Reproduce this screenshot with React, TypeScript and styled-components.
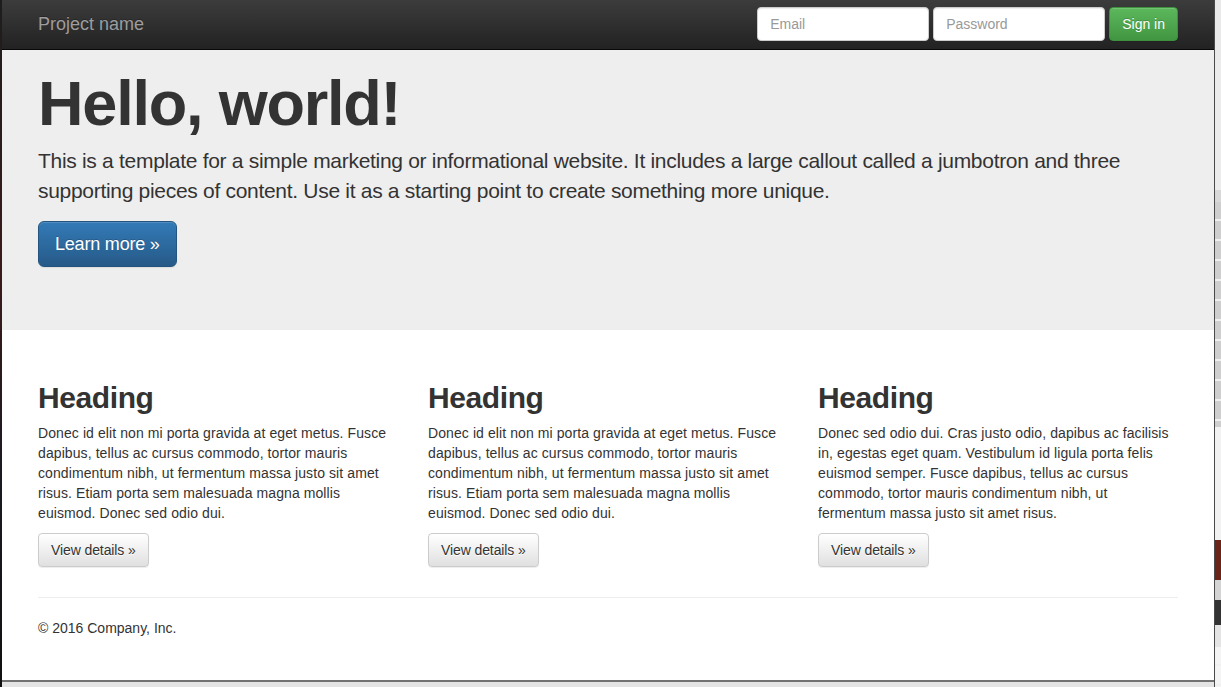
import * as React from "react";
import styled, { createGlobalStyle } from "styled-components";

const GlobalStyle = createGlobalStyle`
  html, body {
    margin: 0;
    padding: 0;
    overflow: hidden;
  }
  body {
    font-family: "Liberation Sans", Arial, Helvetica, sans-serif;
    font-size: 14px;
    line-height: 20px;
    color: #333;
    background: #e6e6e6;
  }
  * {
    box-sizing: border-box;
  }
`;

const columns = [
  {
    title: "Heading",
    text:
      "Donec id elit non mi porta gravida at eget metus. Fusce dapibus, tellus ac cursus commodo, tortor mauris condimentum nibh, ut fermentum massa justo sit amet risus. Etiam porta sem malesuada magna mollis euismod. Donec sed odio dui.",
  },
  {
    title: "Heading",
    text:
      "Donec id elit non mi porta gravida at eget metus. Fusce dapibus, tellus ac cursus commodo, tortor mauris condimentum nibh, ut fermentum massa justo sit amet risus. Etiam porta sem malesuada magna mollis euismod. Donec sed odio dui.",
  },
  {
    title: "Heading",
    text:
      "Donec sed odio dui. Cras justo odio, dapibus ac facilisis in, egestas eget quam. Vestibulum id ligula porta felis euismod semper. Fusce dapibus, tellus ac cursus commodo, tortor mauris condimentum nibh, ut fermentum massa justo sit amet risus.",
  },
];

// bits of the other window peeking out on the right edge
const backdrop = [
  { h: 60, bg: "#e9e9e9" },
  { h: 130, bg: "#ececec" },
  { h: 12, bg: "#d8d8d8" },
  { h: 225, bg: "#cfcfcf", stripes: true },
  { h: 113, bg: "#f2f2f2" },
  { h: 40, bg: "#6b2418" },
  { h: 20, bg: "#d4d4d4" },
  { h: 25, bg: "#333" },
  { h: 22, bg: "#e4e4e4" },
  { h: 40, bg: "#f4f4f4", stripes: true },
];

export default function App() {
  return (
    <>
      <GlobalStyle />
      <Desktop>
        <LeftEdge />
        <WindowColumn>
          <Window>
            <Navbar>
              <NavContainer>
                <Brand>Project name</Brand>
                <NavForm>
                  <Field type="text" placeholder="Email" />
                  <Field type="password" placeholder="Password" />
                  <Button variant="success">Sign in</Button>
                </NavForm>
              </NavContainer>
            </Navbar>

            <Jumbotron>
              <Container>
                <Title>Hello, world!</Title>
                <Lead>
                  This is a template for a simple marketing or informational website. It includes a large
                  callout called a jumbotron and three supporting pieces of content. Use it as a starting
                  point to create something more unique.
                </Lead>
                <Para>
                  <Button variant="primary" size="lg">Learn more &raquo;</Button>
                </Para>
              </Container>
            </Jumbotron>

            <Container>
              <Row>
                {columns.map((col, i) => (
                  <Column key={i}>
                    <Heading>{col.title}</Heading>
                    <BodyText>{col.text}</BodyText>
                    <Para>
                      <Button>View details &raquo;</Button>
                    </Para>
                  </Column>
                ))}
              </Row>
              <Rule />
              <Footer>
                <Para>&copy; 2016 Company, Inc.</Para>
              </Footer>
            </Container>
          </Window>
        </WindowColumn>
        <Backdrop>
          {backdrop.map((b, i) => (
            <BackdropBlock key={i} $h={b.h} $bg={b.bg} $stripes={!!b.stripes} />
          ))}
        </Backdrop>
      </Desktop>
    </>
  );
}

const Desktop = styled("div")`
  display: flex;
  width: 1221px;
  height: 687px;
  overflow: hidden;
`;
const LeftEdge = styled("div")`
  width: 2px;
  flex: none;
  background: linear-gradient(#1d1d1d, #3a1a1a 40%, #1a1a22 70%, #111);
`;
const WindowColumn = styled("div")`
  width: 1212px;
  flex: none;
  display: flex;
  flex-direction: column;
  background: #e4e4e4;
`;
const Window = styled("div")`
  height: 682px;
  flex: none;
  background: #fff;
  border-bottom: 2px solid #727272;
  overflow: hidden;
`;
const Backdrop = styled("div")`
  flex: 1;
  display: flex;
  flex-direction: column;
  border-left: 1px solid #4a4a4a;
`;
const BackdropBlock = styled("div")<{ $h: number; $bg: string; $stripes: boolean }>`
  height: ${p => p.$h}px;
  flex: none;
  background: ${p => p.$bg};
  ${p =>
    p.$stripes &&
    `background-image: repeating-linear-gradient(#0000 0 17px, #f0f0f0 17px 19px, #0000 19px 20px);`}
`;

const Navbar = styled("nav")`
  height: 50px;
  background: linear-gradient(#3c3c3c, #222);
  border-bottom: 1px solid #080808;
`;
const Container = styled("div")`
  width: 1170px;
  margin: 0 auto;
  padding: 0 15px;
`;
const NavContainer = styled(Container)`
  display: flex;
  justify-content: space-between;
  align-items: flex-start;
`;
const Brand = styled("a")`
  padding: 14px 0 15px;
  font-size: 18px;
  line-height: 20px;
  color: #9d9d9d;
  text-shadow: 0 -1px 0 rgba(0, 0, 0, 0.25);
`;
const NavForm = styled("form")`
  display: flex;
  gap: 4px;
  margin-top: 7px;
`;
const Field = styled("input")`
  width: 172px;
  height: 34px;
  padding: 6px 12px;
  font-family: inherit;
  font-size: 14px;
  color: #555;
  background: #fff;
  border: 1px solid #ccc;
  border-radius: 4px;
  box-shadow: inset 0 1px 1px rgba(0, 0, 0, 0.075);
  outline: none;
  &::placeholder {
    color: #999;
  }
`;

const Button = styled("a")<{ variant?: "default" | "primary" | "success"; size?: "lg" }>`
  display: inline-block;
  font-family: inherit;
  font-size: ${p => (p.size === "lg" ? "18px" : "14px")};
  line-height: ${p => (p.size === "lg" ? "24px" : "20px")};
  padding: ${p => (p.size === "lg" ? "10px 16px" : "6px 12px")};
  border-radius: ${p => (p.size === "lg" ? "6px" : "4px")};
  border: 1px solid;
  white-space: nowrap;
  cursor: pointer;
  box-shadow: inset 0 1px 0 rgba(255, 255, 255, 0.15), 0 1px 1px rgba(0, 0, 0, 0.075);
  ${p =>
    p.variant === "primary"
      ? `
    color: #fff;
    background: linear-gradient(#337ab7, #265a88);
    border-color: #245580;
    text-shadow: 0 -1px 0 rgba(0, 0, 0, 0.2);
    letter-spacing: -0.2px;
  `
      : p.variant === "success"
      ? `
    color: #fff;
    background: linear-gradient(#5cb85c, #419641);
    border-color: #3e8f3e;
    text-shadow: 0 -1px 0 rgba(0, 0, 0, 0.2);
  `
      : `
    color: #333;
    background: linear-gradient(#fff, #e0e0e0);
    border-color: #ccc;
    text-shadow: 0 1px 0 #fff;
    letter-spacing: -0.1px;
  `}
`;

const Jumbotron = styled("div")`
  background: #eee;
  padding: 19px 0 53px;
  margin-bottom: 30px;
`;
const Title = styled("h1")`
  margin: 0 0 8px;
  font-size: 63px;
  line-height: 69px;
  font-weight: 700;
  letter-spacing: -1.2px;
  color: #333;
`;
const Lead = styled("p")`
  margin: 0 0 15px;
  font-size: 21px;
  line-height: 30px;
  font-weight: 300;
  letter-spacing: -0.3px;
`;
const Para = styled("p")`
  margin: 0 0 10px;
`;

const Row = styled("div")`
  display: grid;
  grid-template-columns: repeat(3, 360px);
  column-gap: 30px;
`;
const Column = styled("div")``;
const Heading = styled("h2")`
  margin: 21px 0 9px;
  font-size: 30px;
  line-height: 33px;
  font-weight: 700;
  letter-spacing: -0.4px;
`;
const BodyText = styled(Para)`
  letter-spacing: 0.09px;
`;
const Rule = styled("hr")`
  margin: 20px 0;
  border: 0;
  border-top: 1px solid #eee;
`;
const Footer = styled("footer")``;
